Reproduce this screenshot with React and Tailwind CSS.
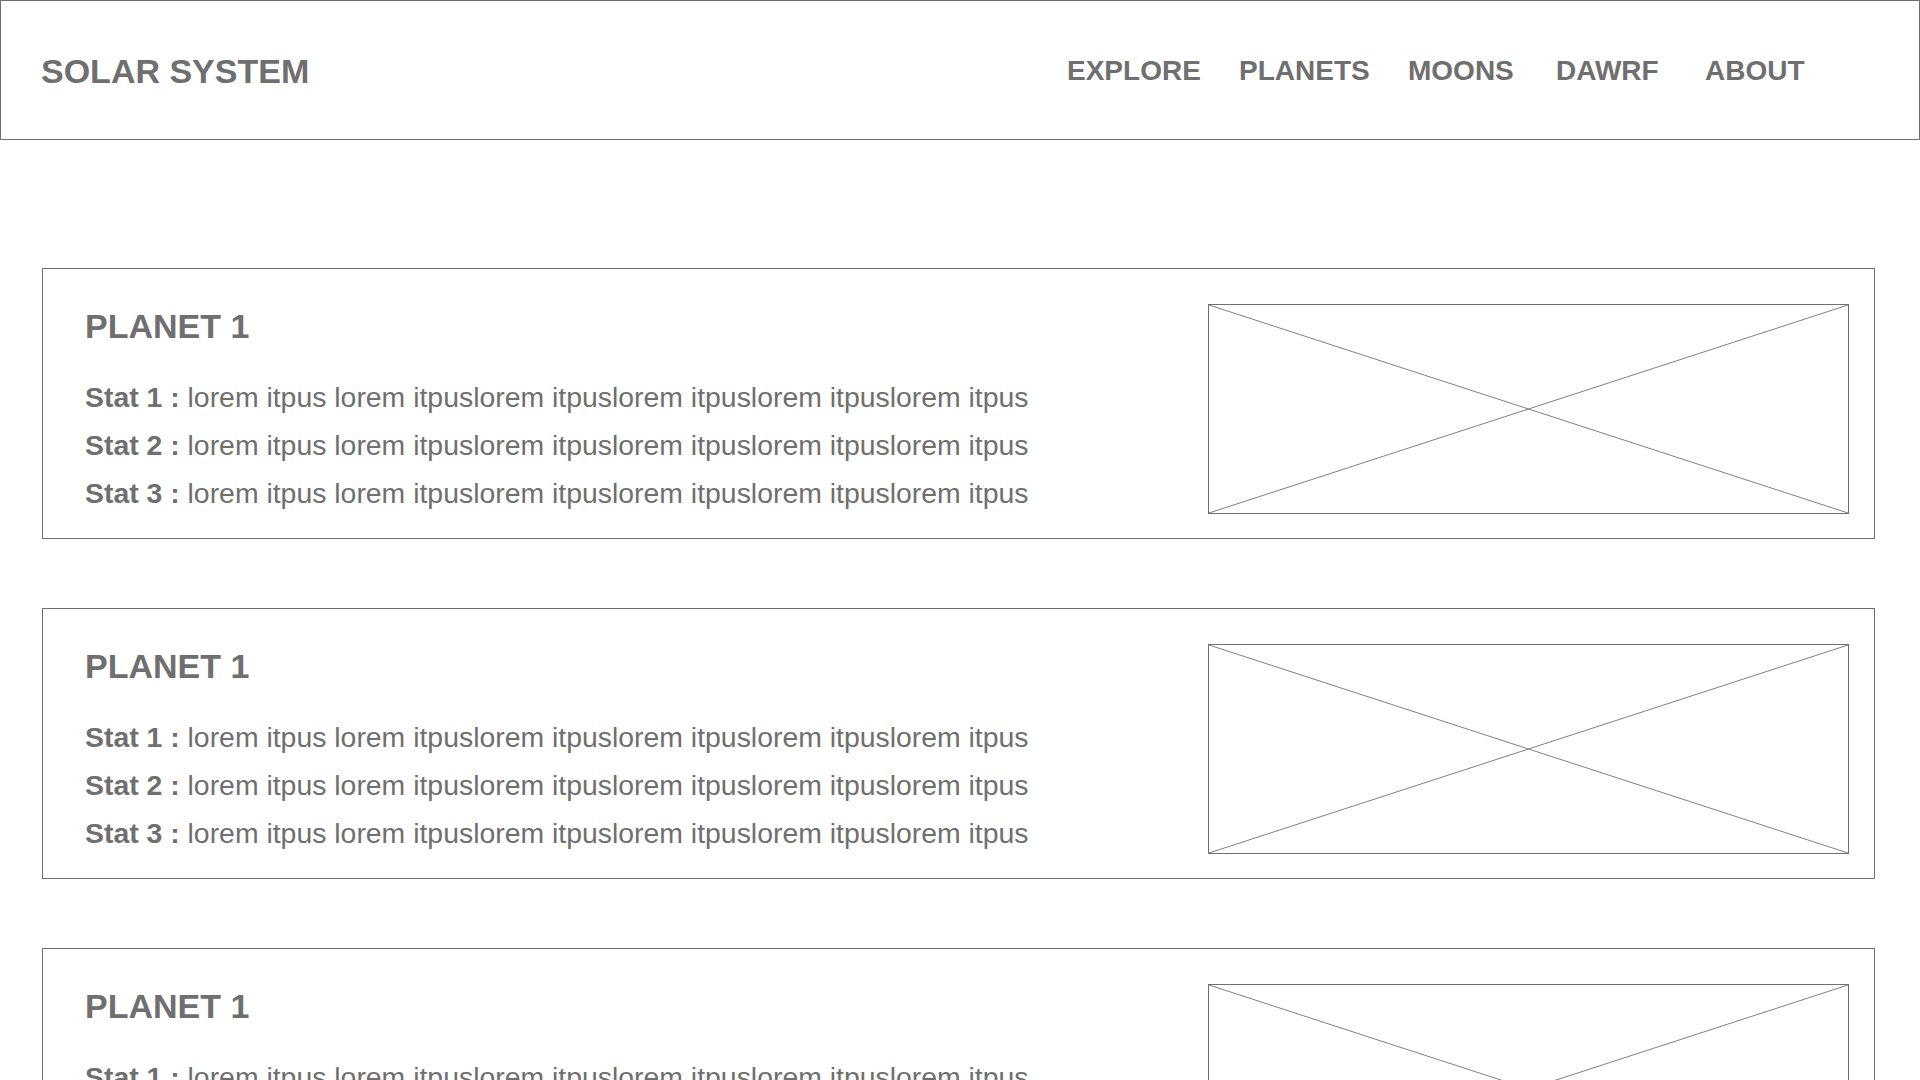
import React from "react";

const navItems = [
  { label: "EXPLORE", width: "w-[172px]" },
  { label: "PLANETS", width: "w-[169px]" },
  { label: "MOONS", width: "w-[148px]" },
  { label: "DAWRF", width: "w-[149px]" },
  { label: "ABOUT", width: "w-[100px]" },
];

const planets = [
  { name: "PLANET 1", stats: ["Stat 1", "Stat 2", "Stat 3"] },
  { name: "PLANET 1", stats: ["Stat 1", "Stat 2", "Stat 3"] },
  { name: "PLANET 1", stats: ["Stat 1", "Stat 2", "Stat 3"] },
];

const lorem =
  "lorem itpus lorem itpuslorem itpuslorem itpuslorem itpuslorem itpus";

const ImagePlaceholder = () => (
  <div className="relative mt-[35px] mr-[25px] ml-auto w-[641px] h-[210px] border border-[#707070] shrink-0">
    <svg
      className="absolute inset-0 w-full h-full"
      viewBox="0 0 100 100"
      preserveAspectRatio="none"
    >
      <line x1="0" y1="0" x2="100" y2="100" stroke="#808080" strokeWidth="1" vectorEffect="non-scaling-stroke" />
      <line x1="100" y1="0" x2="0" y2="100" stroke="#808080" strokeWidth="1" vectorEffect="non-scaling-stroke" />
    </svg>
  </div>
);

const PlanetCard = ({ planet }) => (
  <div className="flex items-start h-[271px] border border-[#707070] bg-white">
    <div className="pl-[42px] pt-[37px]">
      <h2 className="text-[34px] leading-[40px] font-bold">{planet.name}</h2>
      <div className="mt-[27px]">
        {planet.stats.map((stat, idx) => (
          <p key={idx} className="text-[28.4px] leading-[48px] whitespace-nowrap">
            <span className="font-bold">{stat} : </span>
            {lorem}
          </p>
        ))}
      </div>
    </div>
    <ImagePlaceholder />
  </div>
);

const App = () => {
  return (
    <div
      className="min-h-screen bg-white text-[#6f6f6f]"
      style={{ fontFamily: '"Liberation Sans", Arial, sans-serif' }}
    >
      {/* Header */}
      <header className="flex items-center h-[140px] border border-[#707070] pl-[40px] pt-[2px]">
        <h1 className="text-[34px] font-bold leading-none">SOLAR SYSTEM</h1>
        <nav className="ml-auto mr-[114px] flex items-center">
          {navItems.map((item) => (
            <a
              key={item.label}
              href="#"
              className={`${item.width} text-[28px] font-bold leading-none whitespace-nowrap`}
            >
              {item.label}
            </a>
          ))}
        </nav>
      </header>

      {/* Planet cards */}
      <main className="pt-[128px] pl-[42px] pr-[45px] flex flex-col gap-[69px] pb-[60px]">
        {planets.map((planet, index) => (
          <PlanetCard key={index} planet={planet} />
        ))}
      </main>
    </div>
  );
};

export default App;
